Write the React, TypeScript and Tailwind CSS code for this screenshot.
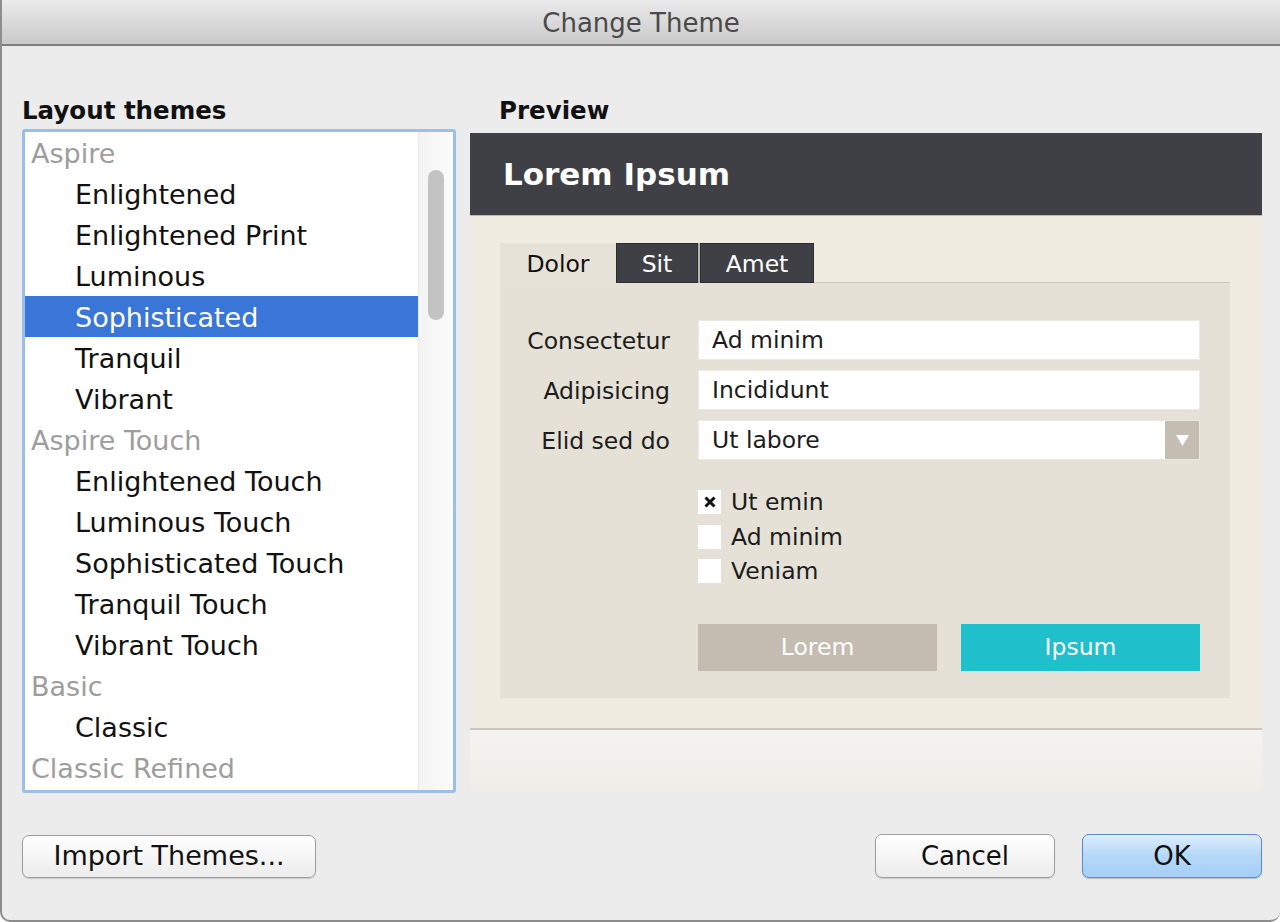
import { useState } from "react";

// list of themes, group headers are greyed out
const themes = [
  { name: "Aspire", group: true },
  { name: "Enlightened" },
  { name: "Enlightened Print" },
  { name: "Luminous" },
  { name: "Sophisticated" },
  { name: "Tranquil" },
  { name: "Vibrant" },
  { name: "Aspire Touch", group: true },
  { name: "Enlightened Touch" },
  { name: "Luminous Touch" },
  { name: "Sophisticated Touch" },
  { name: "Tranquil Touch" },
  { name: "Vibrant Touch" },
  { name: "Basic", group: true },
  { name: "Classic" },
  { name: "Classic Refined", group: true },
];

const fields = [
  { label: "Consectetur", value: "Ad minim" },
  { label: "Adipisicing", value: "Incididunt" },
  { label: "Elid sed do", value: "Ut labore", select: true },
];

const checks = [
  { label: "Ut emin", on: true },
  { label: "Ad minim", on: false },
  { label: "Veniam", on: false },
];

export default function App() {
  const [selected, setSelected] = useState("Sophisticated");

  return (
    <div className="w-[1280px] h-[922px] bg-[#ececec] font-['DejaVu_Sans',sans-serif] flex flex-col overflow-hidden border-l-2 border-b-2 border-[#8d8d8d] rounded-b-[10px]">
      <div className="h-[46px] shrink-0 bg-linear-to-b from-[#ebebeb] to-[#c9c9c9] border-b-2 border-[#7e7e7e] flex items-center justify-center pt-[2px]">
        <span className="text-[26px] text-[#4a4a4a]">Change Theme</span>
      </div>

      <div className="flex-1 flex flex-col pt-[50px] pl-[20px] pr-[18px]">
        <div className="flex gap-[14px]">
          <div className="w-[434px] flex flex-col">
            <div className="h-[33px] leading-[30px] text-[24.5px] font-bold text-[#111]">Layout themes</div>
            <div className="h-[664px] bg-white border-[3px] border-[#9cbfea] rounded-[3px] flex overflow-hidden">
              <div className="flex-1 flex flex-col">
                {themes.map((t) => {
                  const isSel = t.name === selected;
                  return (
                    <div
                      key={t.name}
                      onClick={() => !t.group && setSelected(t.name)}
                      className={
                        "h-[41px] shrink-0 flex items-center pt-[3px] text-[27px] whitespace-nowrap " +
                        (t.group ? "pl-[6px] text-[#9d9d9d]" : "pl-[50px] text-[#111]") +
                        (isSel ? " bg-[#3a76d8] text-white" : "")
                      }
                    >
                      {t.name}
                    </div>
                  );
                })}
              </div>
              <div className="w-[35px] shrink-0 border-l border-[#e9e9e9] bg-linear-to-r from-[#f3f3f3] to-[#fbfbfb] pt-[38px] px-[9px]">
                <div className="h-[150px] rounded-full bg-[#c3c3c3]"></div>
              </div>
            </div>
          </div>

          <div className="w-[792px] flex flex-col">
            <div className="h-[37px] leading-[30px] text-[24.5px] font-bold text-[#111] pl-[29px]">Preview</div>
            <div className="h-[657px] flex flex-col">
              <div className="h-[82px] shrink-0 bg-[#3f4045] flex items-center pl-[33px]">
                <span className="text-[31px] font-bold text-white">Lorem Ipsum</span>
              </div>
              <div className="shrink-0 border-t border-[#bdb9af] bg-[#f0ece2] pt-[27px] pl-[30px] pr-[32px] pb-[30px] flex flex-col">
                <div className="h-[40px] flex text-[23.5px]">
                  <div className="w-[116px] bg-[#e6e2d7] flex items-center justify-center pt-[3px] text-[#111]">Dolor</div>
                  <div className="w-[82px] bg-[#3f4045] border border-[#2c2d31] flex items-center justify-center pt-[3px] text-white">Sit</div>
                  <div className="w-[2px] bg-[#b9b6af]"></div>
                  <div className="w-[114px] bg-[#3f4045] border border-[#2c2d31] flex items-center justify-center pt-[3px] text-white">Amet</div>
                  <div className="flex-1 border-b border-[#cdc8bb]"></div>
                </div>
                <div className="h-[415px] bg-[#e5e1d6] flex flex-col pt-[37px] pr-[30px]">
                  <div className="grid grid-cols-[170px_1fr] gap-x-[28px] gap-y-[10px] text-[23.5px]">
                    {fields.map((f) => (
                      <div key={f.label} className="contents">
                        <div className="h-[40px] leading-[42px] text-right text-[#1c1c1c] whitespace-nowrap">{f.label}</div>
                        <div className="h-[40px] bg-white border border-[#ece9e2] flex items-center">
                          <span className="flex-1 pl-[13px] pt-[2px] text-[#1c1c1c]">{f.value}</span>
                          {f.select && (
                            <div className="w-[34px] h-full bg-[#c4bdb1] flex items-center justify-center">
                              <svg width="13" height="11" viewBox="0 0 13 11">
                                <path d="M0 0 L13 0 L6.5 11 Z" fill="#ffffff" />
                              </svg>
                            </div>
                          )}
                        </div>
                      </div>
                    ))}
                  </div>

                  <div className="ml-[198px] mt-[30px] flex flex-col gap-[10.5px] text-[23.5px]">
                    {checks.map((c) => (
                      <div key={c.label} className="h-[24px] flex items-center gap-[10px]">
                        <div className="w-[23px] h-[24px] bg-white flex items-center justify-center">
                          {c.on && (
                            <svg width="14" height="14" viewBox="0 0 14 14">
                              <path d="M2.5 2.5 L11.5 11.5 M11.5 2.5 L2.5 11.5" stroke="#111" strokeWidth="3" />
                            </svg>
                          )}
                        </div>
                        <span className="text-[#1c1c1c] pt-[2px]">{c.label}</span>
                      </div>
                    ))}
                  </div>

                  <div className="ml-[198px] mt-[41px] flex gap-[24px] text-[23.5px] text-white">
                    <div className="w-[239px] h-[47px] bg-[#c4bcb0] flex items-center justify-center">Lorem</div>
                    <div className="w-[239px] h-[47px] bg-[#20bfcc] flex items-center justify-center">Ipsum</div>
                  </div>
                </div>
              </div>
              <div className="flex-1 border-t-2 border-[#cbc7be] bg-linear-to-b from-[#f5f3ef] to-[#efede8]"></div>
            </div>
          </div>
        </div>

        <div className="mt-[41px] flex items-center justify-between text-[27px] text-[#111]">
          <button className="w-[294px] h-[43px] rounded-[7px] border border-[#9e9e9e] bg-linear-to-b from-white to-[#ececec] shadow-[0_1px_1px_rgba(0,0,0,0.15)]">
            Import Themes...
          </button>
          <div className="flex gap-[27px] text-[26px]">
            <button className="w-[180px] h-[44px] rounded-[7px] border border-[#9e9e9e] bg-linear-to-b from-white to-[#ececec] shadow-[0_1px_1px_rgba(0,0,0,0.15)]">
              Cancel
            </button>
            <button className="w-[180px] h-[44px] rounded-[7px] border border-[#5a8bd0] bg-linear-to-b from-[#dcedfd] via-[#b5d8f8] to-[#a4cff7] shadow-[0_1px_1px_rgba(0,0,0,0.2)]">
              OK
            </button>
          </div>
        </div>
      </div>
    </div>
  );
}
